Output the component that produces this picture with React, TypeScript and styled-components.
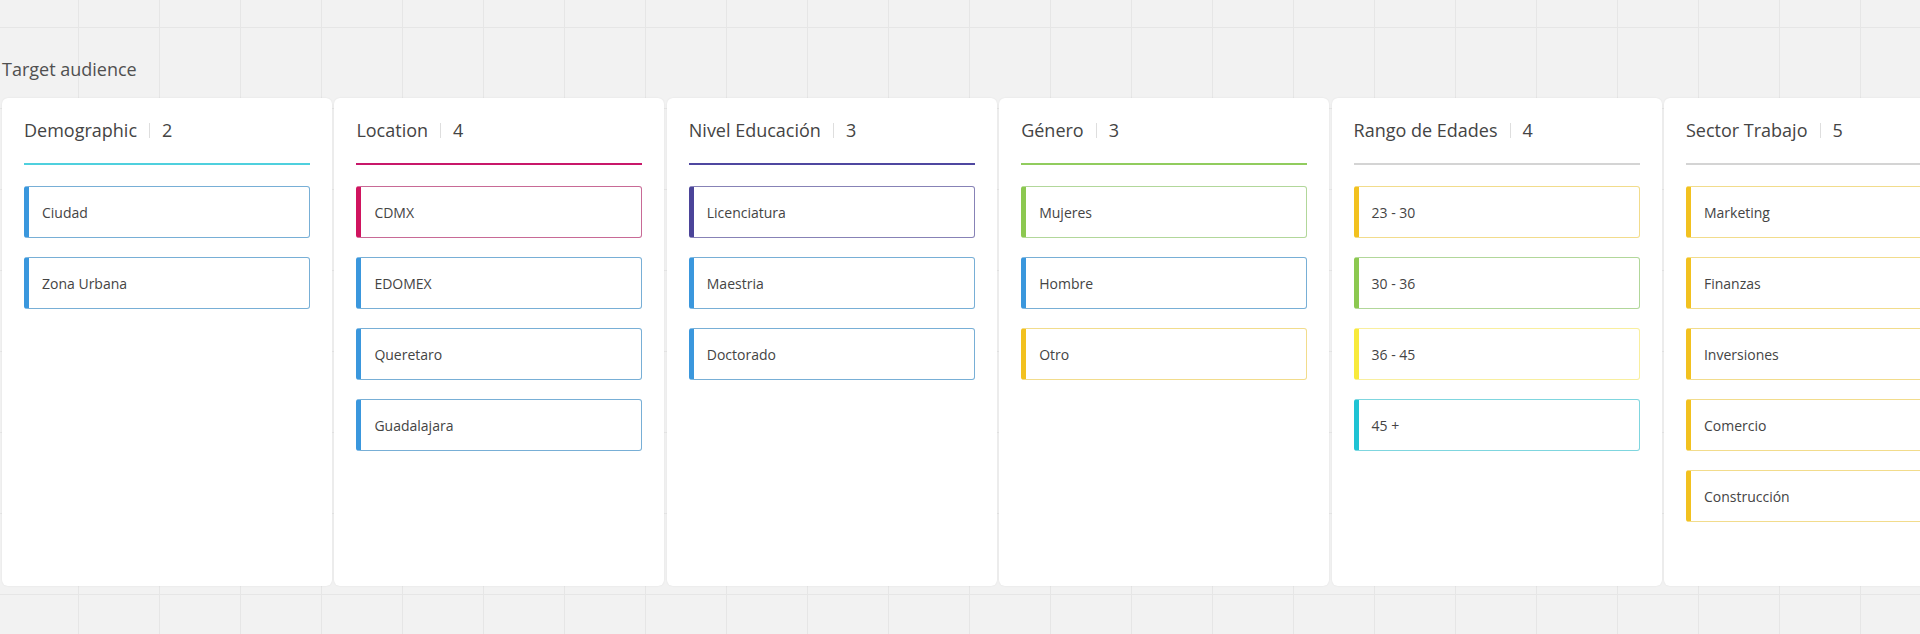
import styled, { createGlobalStyle } from 'styled-components';

type Tag = {
  label: string;
  bar: string;
  border: string;
};

type Group = {
  title: string;
  line: string;
  tags: Tag[];
};

const blue = { bar: '#3a97dd', border: '#78afd6' };
const pink = { bar: '#d0145f', border: '#c86a96' };
const indigo = { bar: '#4b4499', border: '#8782b6' };
const green = { bar: '#8cc850', border: '#b2d79a' };
const gold = { bar: '#f2c11f', border: '#f2dc8c' };
const lemon = { bar: '#f8ea3c', border: '#f9ef9e' };
const teal = { bar: '#1fc3d4', border: '#7fd6df' };

const groups: Group[] = [
  {
    title: 'Demographic',
    line: '#4fd0de',
    tags: [
      { label: 'Ciudad', ...blue },
      { label: 'Zona Urbana', ...blue },
    ],
  },
  {
    title: 'Location',
    line: '#c8186a',
    tags: [
      { label: 'CDMX', ...pink },
      { label: 'EDOMEX', ...blue },
      { label: 'Queretaro', ...blue },
      { label: 'Guadalajara', ...blue },
    ],
  },
  {
    title: 'Nivel Educación',
    line: '#4f47a0',
    tags: [
      { label: 'Licenciatura', ...indigo },
      { label: 'Maestria', ...blue },
      { label: 'Doctorado', ...blue },
    ],
  },
  {
    title: 'Género',
    line: '#91cc5e',
    tags: [
      { label: 'Mujeres', ...green },
      { label: 'Hombre', ...blue },
      { label: 'Otro', ...gold },
    ],
  },
  {
    title: 'Rango de Edades',
    line: '#d4d4d4',
    tags: [
      { label: '23 - 30', ...gold },
      { label: '30 - 36', ...green },
      { label: '36 - 45', ...lemon },
      { label: '45 +', ...teal },
    ],
  },
  {
    title: 'Sector Trabajo',
    line: '#d4d4d4',
    tags: [
      { label: 'Marketing', ...gold },
      { label: 'Finanzas', ...gold },
      { label: 'Inversiones', ...gold },
      { label: 'Comercio', ...gold },
      { label: 'Construcción', ...gold },
    ],
  },
];

export default function App() {
  return (
    <>
      <GlobalStyle />
      <Board>
        <Label>Target audience</Label>
        <Columns>
          {groups.map((group) => (
            <Card key={group.title}>
              <Header $line={group.line}>
                <Title>{group.title}</Title>
                <Divider />
                <Count>{group.tags.length}</Count>
              </Header>
              <TagList>
                {group.tags.map((tag) => (
                  <TagItem key={tag.label} $bar={tag.bar} $border={tag.border}>
                    {tag.label}
                  </TagItem>
                ))}
              </TagList>
            </Card>
          ))}
        </Columns>
      </Board>
    </>
  );
}

const GlobalStyle = createGlobalStyle`
  html, body {
    margin: 0;
    padding: 0;
  }

  body {
    font-family: 'Open Sans', 'Liberation Sans', sans-serif;
    background: #f2f2f2;
  }
`;

const Board = styled.div`
  width: 1920px;
  height: 634px;
  overflow: hidden;
  box-sizing: border-box;
  padding: 57px 0 0 2px;
  background-color: #f2f2f2;
  background-image: linear-gradient(to right, #e6e6e6 1px, transparent 1px),
    linear-gradient(to bottom, #e6e6e6 1px, transparent 1px);
  background-size: 81px 81px;
  background-position: -3px 27px;
`;

const Label = styled.div`
  font-size: 18px;
  line-height: 24px;
  color: #505050;
  margin-bottom: 17px;
`;

const Columns = styled.div`
  display: flex;
  gap: 2.4px;
`;

const Card = styled.div`
  flex: 0 0 330px;
  height: 488px;
  box-sizing: border-box;
  padding: 20px 22px 0 22px;
  background: #fff;
  border-radius: 6px;
  box-shadow: 0 0 2px rgba(0, 0, 0, 0.08);
`;

const Header = styled.div<{ $line: string }>`
  display: flex;
  align-items: center;
  height: 24px;
  padding-bottom: 21px;
  border-bottom: 2px solid ${(p) => p.$line};
  margin-bottom: 21px;
`;

const Title = styled.span`
  font-size: 18px;
  color: #444;
`;

const Divider = styled.span`
  width: 1px;
  height: 15px;
  margin: 0 12px;
  background: #dedede;
`;

const Count = styled.span`
  font-size: 18px;
  color: #444;
`;

const TagList = styled.div`
  display: flex;
  flex-direction: column;
  gap: 19px;
`;

const TagItem = styled.div<{ $bar: string; $border: string }>`
  height: 52px;
  box-sizing: border-box;
  display: flex;
  align-items: center;
  padding-left: 13px;
  font-size: 14px;
  color: #444;
  border: 1px solid ${(p) => p.$border};
  border-left: 5px solid ${(p) => p.$bar};
  border-radius: 3px;
`;
